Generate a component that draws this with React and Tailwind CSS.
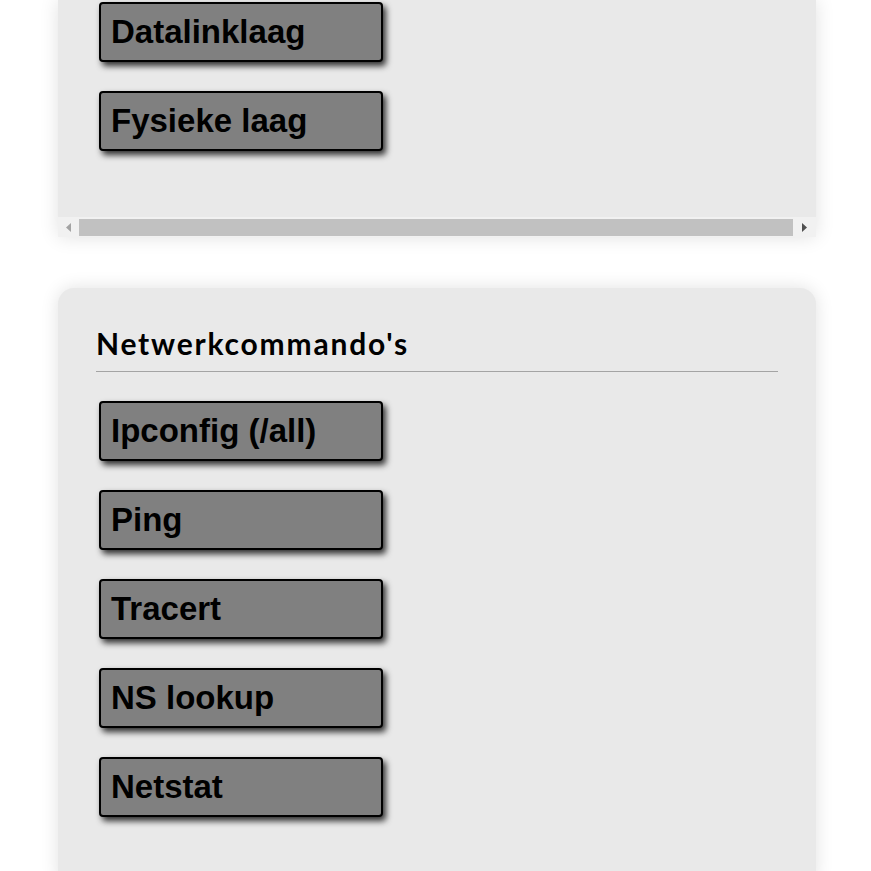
import React from "react";

const osiTail = ["Datalinklaag", "Fysieke laag"];
const commands = ["Ipconfig (/all)", "Ping", "Tracert", "NS lookup", "Netstat"];

function LayerButton({ label }) {
  return (
    <button
      className="h-[60px] w-[284px] ml-[3px] shrink-0 rounded-[4px] border-2 border-black bg-[#808080] pl-[10px] text-left text-[33px] font-bold text-black shadow-[3px_4px_6px_rgba(0,0,0,0.8)]"
      style={{ fontFamily: '"Liberation Sans", Arial, sans-serif' }}
    >
      {label}
    </button>
  );
}

function FakeScrollbar() {
  return (
    <div className="flex h-[20px] items-center bg-[#f1f1f1]">
      <div className="flex w-[21px] justify-center">
        <svg width="5" height="9" viewBox="0 0 5 9">
          <polygon points="5,0 5,9 0,4.5" fill="#a3a3a3" />
        </svg>
      </div>
      <div className="h-[17px] flex-1 bg-[#c1c1c1]" />
      <div className="flex w-[23px] justify-center">
        <svg width="5" height="9" viewBox="0 0 5 9">
          <polygon points="0,0 0,9 5,4.5" fill="#505050" />
        </svg>
      </div>
    </div>
  );
}

export default function App() {
  return (
    <div className="min-h-[871px] overflow-hidden bg-white">
      <div className="ml-[58px] flex w-[758px] flex-col">
        {/* tail of the OSI card, scrolled past its top */}
        <div className="bg-[#e9e9e9] shadow-[0_0_18px_rgba(0,0,0,0.12)]">
          <div className="flex flex-col gap-[29px] pt-[2px] pb-[66px] pl-[38px]">
            {osiTail.map((l) => (
              <LayerButton key={l} label={l} />
            ))}
          </div>
          <FakeScrollbar />
        </div>

        {/* NETWORK COMMANDS */}
        <div className="mt-[51px] rounded-[16px] bg-[#e9e9e9] px-[38px] pt-[37px] pb-[70px] shadow-[0_0_18px_rgba(0,0,0,0.12)]">
          <h2
            className="text-[30px] leading-[36px] font-bold tracking-[0.06em] text-black"
            style={{ fontFamily: "Lato, sans-serif" }}
          >
            Netwerkcommando's
          </h2>
          <hr className="mt-[10px] border-t border-[#a4a4a4]" />
          <div className="mt-[29px] flex flex-col gap-[29px]">
            {commands.map((c) => (
              <LayerButton key={c} label={c} />
            ))}
          </div>
        </div>
      </div>
    </div>
  );
}
